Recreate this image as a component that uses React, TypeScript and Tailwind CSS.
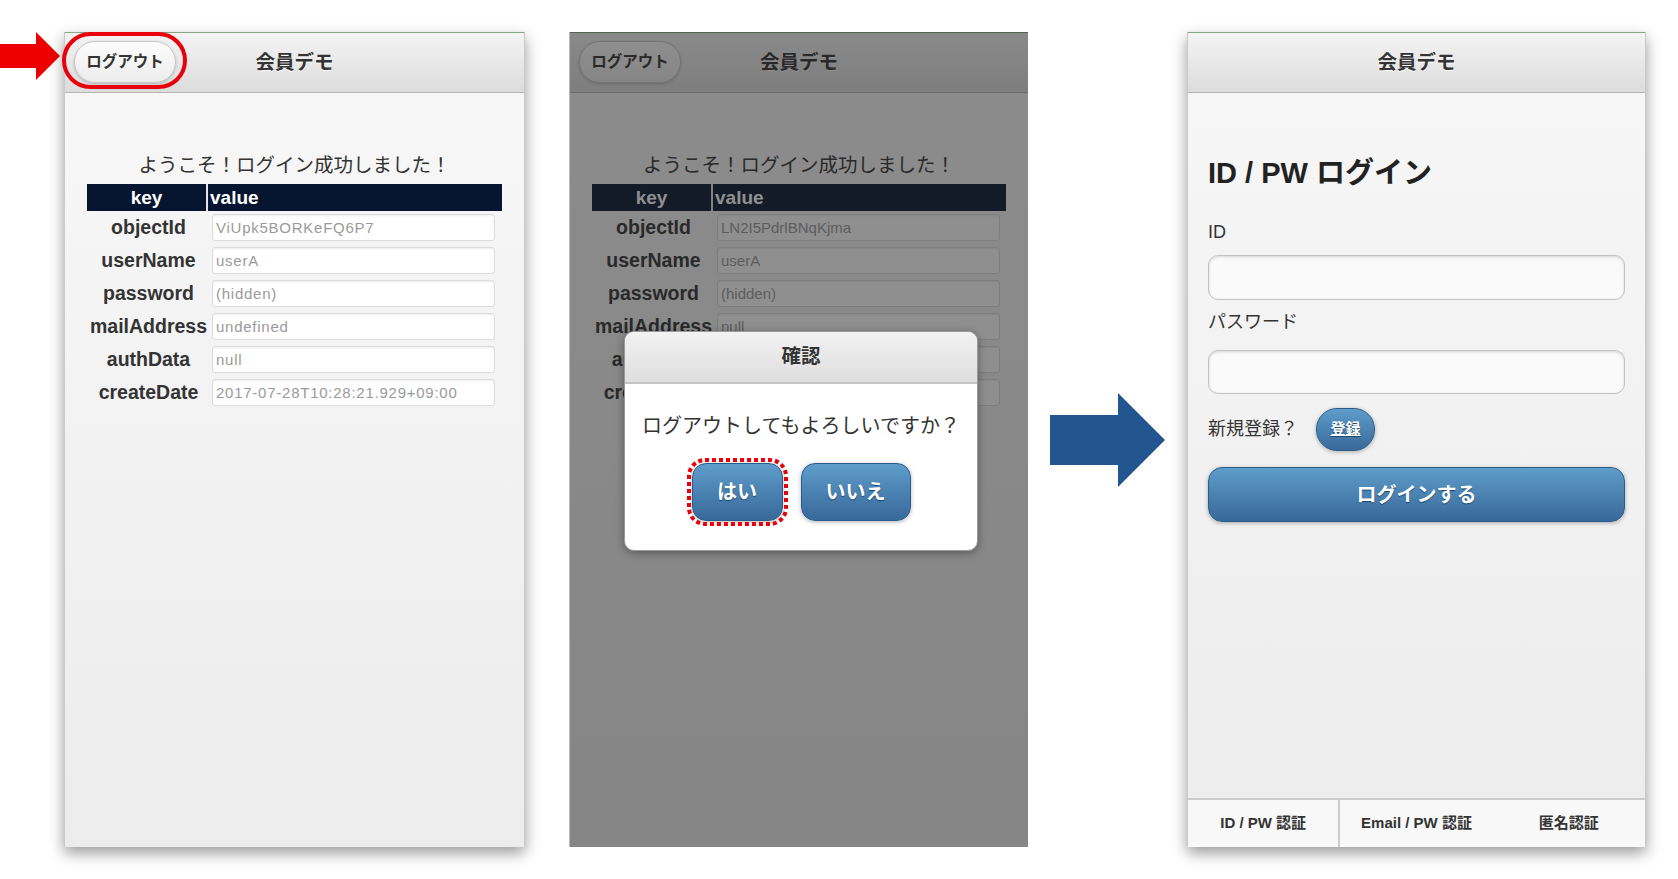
import React from 'react';

const rows1 = [
  { key: 'objectId', value: 'ViUpk5BORKeFQ6P7' },
  { key: 'userName', value: 'userA' },
  { key: 'password', value: '(hidden)' },
  { key: 'mailAddress', value: 'undefined' },
  { key: 'authData', value: 'null' },
  { key: 'createDate', value: '2017-07-28T10:28:21.929+09:00' },
];

const rows2 = [
  { key: 'objectId', value: 'LN2I5PdrlBNqKjma' },
  { key: 'userName', value: 'userA' },
  { key: 'password', value: '(hidden)' },
  { key: 'mailAddress', value: 'null' },
  { key: 'authData', value: 'null' },
  { key: 'createDate', value: '2017-07-28T10:31:05.112+09:00' },
];

const Header = ({ logout, ring }: { logout?: boolean; ring?: boolean }) => (
  <div className="relative h-[61px] shrink-0 border-t border-t-[#86a686] border-b border-b-[#b5b5b5] bg-gradient-to-b from-[#f4f4f4] to-[#dcdcdc] flex items-center justify-center">
    <span className="text-[19.5px] font-bold text-[#333] [text-shadow:0_1px_0_#fff]">会員デモ</span>
    {logout && (
      <button className="absolute left-[9px] top-[8px] w-[102px] h-[42px] rounded-full border border-[#c6c6c6] bg-gradient-to-b from-[#fdfdfd] to-[#ececec] shadow-[0_1px_3px_rgba(0,0,0,0.2)] text-[15.5px] font-bold text-[#333]">
        ログアウト
      </button>
    )}
    {ring && (
      <div className="absolute left-[-3px] top-[-1px] w-[125px] h-[57px] rounded-full border-[4px] border-[#e8000b]" />
    )}
  </div>
);

const InfoTable = ({ rows, tracking }: { rows: { key: string; value: string }[]; tracking?: boolean }) => (
  <div className="mx-[22px] mt-[7px]">
    <div className="flex h-[27px] bg-[#061530] text-white text-[19px] font-bold leading-[27px]">
      <div className="w-[121px] text-center border-r-2 border-r-[#e6e6e6]">key</div>
      <div className="flex-1 pl-[2px]">value</div>
    </div>
    {rows.map((r) => (
      <div key={r.key} className="flex h-[33px] items-center">
        <div className="w-[123px] text-center text-[19.5px] font-bold text-[#333]">{r.key}</div>
        <div
          className={`ml-[2px] w-[283px] h-[27px] rounded-[3px] border border-[#dcdcdc] bg-white shadow-[inset_0_1px_2px_rgba(0,0,0,0.08)] px-[3px] text-[15px] leading-[25px] text-[#9a9a9a] whitespace-nowrap overflow-hidden ${
            tracking ? 'tracking-[0.05em]' : ''
          }`}
        >
          {r.value}
        </div>
      </div>
    ))}
  </div>
);

const BlueButton = ({ children, className }: { children: React.ReactNode; className: string }) => (
  <button
    className={`border border-[#2b5d8c] bg-gradient-to-b from-[#5f9dca] to-[#38699a] text-white font-bold [text-shadow:0_1px_1px_#1d466b] shadow-[0_1px_4px_rgba(0,0,0,0.3)] ${className}`}
  >
    {children}
  </button>
);

export default function App() {
  return (
    <div className="w-[1678px] h-[879px] bg-white overflow-hidden flex items-start pt-[32px] font-['Liberation_Sans','Noto_Sans_CJK_JP',sans-serif]">
      {/* red pointer */}
      <div className="w-[64px] shrink-0">
        <svg width="60" height="48" viewBox="0 0 60 48">
          <polygon points="0,12 36,12 36,0 60,24 36,48 36,36 0,36" fill="#ee0000" />
        </svg>
      </div>

      {/* logged in */}
      <div className="relative w-[461px] h-[815px] shrink-0 flex flex-col bg-gradient-to-b from-[#f8f8f8] to-[#ececec] border-x border-[#c9c9c9] shadow-[0_6px_14px_rgba(0,0,0,0.4)]">
        <Header logout ring />
        <p className="mt-[60px] text-center text-[19.5px] leading-[24px] text-[#333]">ようこそ！ログイン成功しました！</p>
        <InfoTable rows={rows1} tracking />
      </div>

      <div className="w-[44px] shrink-0" />

      {/* confirm dialog */}
      <div className="relative w-[459px] h-[815px] shrink-0 flex flex-col bg-gradient-to-b from-[#f8f8f8] to-[#ececec] border-l border-[#bbb]">
        <Header logout />
        <p className="mt-[60px] text-center text-[19.5px] leading-[24px] text-[#333]">ようこそ！ログイン成功しました！</p>
        <InfoTable rows={rows2} />
        <div className="absolute inset-0 bg-[#202020]/50" />
        <div className="absolute left-[54px] top-[299px] w-[354px] h-[220px] rounded-[10px] bg-white border border-[#9a9a9a] shadow-[0_2px_8px_rgba(0,0,0,0.35)] overflow-hidden flex flex-col">
          <div className="h-[52px] shrink-0 bg-gradient-to-b from-[#f2f2f2] to-[#dedede] border-b-2 border-b-[#c4c4c4] flex items-center justify-center text-[19.5px] font-bold text-[#333]">
            確認
          </div>
          <p className="mt-[30px] text-center text-[20px] leading-[24px] text-[#333]">ログアウトしてもよろしいですか？</p>
          <div className="mt-[25px] flex justify-center gap-[18px]">
            <div className="relative">
              <BlueButton className="w-[91px] h-[58px] rounded-[14px] text-[20px]">はい</BlueButton>
              <svg className="absolute left-[-5px] top-[-5px]" width="101" height="68" viewBox="0 0 101 68">
                <rect x="2" y="2" width="97" height="64" rx="16" fill="none" stroke="#e8000b" strokeWidth="4" strokeDasharray="4 3" />
              </svg>
            </div>
            <BlueButton className="w-[110px] h-[58px] rounded-[14px] text-[20px]">いいえ</BlueButton>
          </div>
        </div>
      </div>

      {/* next arrow */}
      <div className="w-[159px] h-[815px] shrink-0 flex items-center pl-[22px]">
        <svg width="115" height="94" viewBox="0 0 115 94">
          <polygon points="0,22 68,22 68,0 115,47 68,94 68,72 0,72" fill="#235591" />
        </svg>
      </div>

      {/* login */}
      <div className="w-[459px] h-[815px] shrink-0 flex flex-col bg-gradient-to-b from-[#f7f7f7] to-[#ececec] border-x border-[#c9c9c9] shadow-[0_6px_14px_rgba(0,0,0,0.4)]">
        <Header />
        <div className="flex-1 px-[20px] flex flex-col">
          <h2 className="mt-[63px] text-[29px] leading-[34px] font-bold text-[#222]">ID / PW ログイン</h2>
          <div className="mt-[31px] text-[18px] leading-[22px] text-[#333]">ID</div>
          <div className="mt-[12px] h-[45px] rounded-[10px] border border-[#c2c2c2] bg-[#fafafa] shadow-[inset_0_1px_3px_rgba(0,0,0,0.15)]" />
          <div className="mt-[11px] text-[18px] leading-[22px] text-[#333]">パスワード</div>
          <div className="mt-[17px] h-[44px] rounded-[10px] border border-[#c2c2c2] bg-[#fafafa] shadow-[inset_0_1px_3px_rgba(0,0,0,0.15)]" />
          <div className="mt-[14px] h-[43px] flex items-center">
            <span className="text-[18px] text-[#333]">新規登録？</span>
            <BlueButton className="ml-[18px] w-[59px] h-[43px] rounded-[21px] text-[15px] underline">登録</BlueButton>
          </div>
          <BlueButton className="mt-[16px] h-[55px] rounded-[14px] text-[20px]">ログインする</BlueButton>
        </div>
        <div className="h-[49px] shrink-0 border-t-2 border-t-[#cbcbcb] bg-[#f8f8f8] grid grid-cols-3 text-[15px] font-bold text-[#333]">
          <div className="flex items-center justify-center border-r-2 border-r-[#cbcbcb]">ID / PW 認証</div>
          <div className="flex items-center justify-center">Email / PW 認証</div>
          <div className="flex items-center justify-center">匿名認証</div>
        </div>
      </div>
    </div>
  );
}
